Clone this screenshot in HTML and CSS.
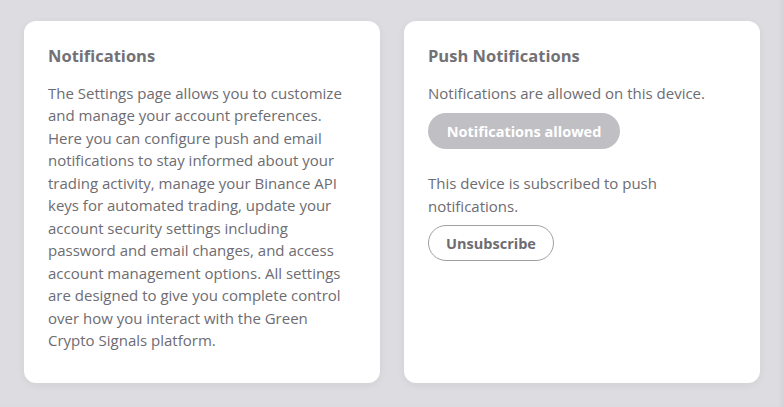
FILE: index.html
```html
<!DOCTYPE html>
<html lang="en">
<head>
<meta charset="utf-8">
<title>Settings</title>
<link rel="stylesheet" href="styles.css">
</head>
<body>
<main class="grid">
  <section class="card">
    <h2 class="card-title">Notifications</h2>
    <p class="card-text">The Settings page allows you to customize and manage your account preferences. Here you can configure push and email notifications to stay informed about your trading activity, manage your Binance API keys for automated trading, update your account security settings including password and email changes, and access account management options. All settings are designed to give you complete control over how you interact with the Green Crypto Signals platform.</p>
  </section>
  <section class="card">
    <h2 class="card-title">Push Notifications</h2>
    <p class="card-text">Notifications are allowed on this device.</p>
    <button class="btn btn-allowed" disabled>Notifications allowed</button>
    <p class="card-text status">This device is subscribed to push notifications.</p>
    <button class="btn btn-outline">Unsubscribe</button>
  </section>
</main>
</body>
</html>
```
FILE: styles.css
```css
* { box-sizing: border-box; }
html, body { margin: 0; height: 100%; }
body {
  background: #dddce1;
  font-family: "Open Sans", "Noto Sans", sans-serif;
  color: #6d6c72;
  padding: 21px 24px 0 24px;
  box-shadow: inset -5px 0 5px -3px rgba(0, 0, 0, 0.06);
}
.grid {
  display: grid;
  grid-template-columns: 356px 356px;
  gap: 24px;
}
.card {
  background: #ffffff;
  border-radius: 12px;
  height: 362px;
  padding: 24px 22px 24px 24px;
  box-shadow: 0 2px 8px rgba(0, 0, 0, 0.06);
}
.card-title {
  margin: 0 0 15px 0;
  font-size: 16.5px;
  line-height: 22px;
  font-weight: 700;
  color: #727176;
}
.card-text {
  margin: 0;
  font-size: 15px;
  line-height: 22.45px;
  color: #6d6c72;
}
.btn {
  font-family: inherit;
  font-size: 14.5px;
  font-weight: 700;
  border-radius: 18px;
  height: 36px;
  padding: 0 12px;
  display: block;
}
.btn-allowed {
  margin-top: 9px;
  background: #c0bfc4;
  color: #ffffff;
  border: none;
  width: 192px;
}
.status { margin-top: 23px; }
.btn-outline {
  margin-top: 8px;
  background: #ffffff;
  color: #6d6c72;
  border: 1px solid #a09fa4;
  width: 126px;
}
```
